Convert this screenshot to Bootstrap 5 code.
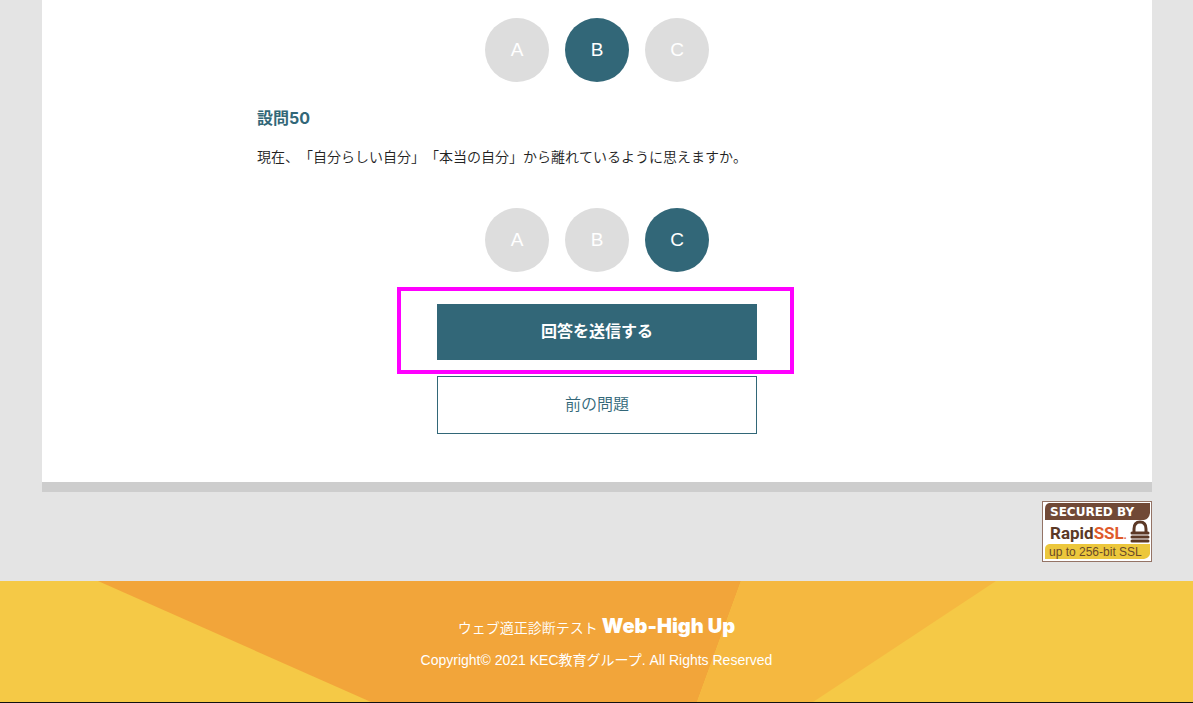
<!DOCTYPE html>
<html lang="ja">
<head>
<meta charset="utf-8">
<meta name="viewport" content="width=device-width, initial-scale=1">
<title>ウェブ適正診断テスト Web-High Up</title>
<link href="https://cdn.jsdelivr.net/npm/bootstrap@5.3.0/dist/css/bootstrap.min.css" rel="stylesheet">
<style>
  :root { --teal: #326778; }
  body { background: #e4e4e4; color: #333; font-family: "Liberation Sans", "Noto Sans CJK JP", sans-serif; font-size: 14px; line-height: 24px; text-spacing-trim: space-all; }
  .page-shell { padding: 0 41px 0 42px; }
  .sheet { border-bottom: 10px solid #cdcdcd; padding: 18px 16px 48px; }
  .question-col { max-width: 680px; }
  .question-title { color: var(--teal); font: 700 16px/24px Inter, "Noto Sans CJK JP", sans-serif; margin: 24px 0 15px; }
  .question-text { color: #222; font-weight: 350; font-kerning: none; margin-bottom: 39px; }
  .choice { width: 64px; height: 64px; background: #ddd; color: #fff; font-size: 19px; cursor: pointer; }
  .btn-check:checked + .choice { background: var(--teal); }
  .btn-check:focus-visible + .choice { outline: 2px solid #7fa6b3; outline-offset: 2px; }
  .actions { max-width: 320px; margin-top: 32px; }
  .action-btn { --bs-btn-border-radius: 0; --bs-btn-font-size: 16px; --bs-btn-line-height: 24px; --bs-btn-padding-y: 15px; --bs-btn-border-color: var(--teal); --bs-btn-hover-border-color: var(--teal); }
  .action-send { --bs-btn-bg: var(--teal); --bs-btn-color: #fff; --bs-btn-hover-bg: #285461; --bs-btn-hover-color: #fff; --bs-btn-font-weight: 700; }
  .action-back { --bs-btn-bg: #fff; --bs-btn-color: var(--teal); --bs-btn-hover-bg: #eef4f6; --bs-btn-hover-color: var(--teal); --bs-btn-font-weight: 350; --bs-btn-padding-y: 16px; }
  .callout-frame { position: absolute; inset: -17px -37px -14px -40px; border: 4px solid #f0f; pointer-events: none; }
  .seal-row { padding: 9px 0 19px; }
  .site-footer { background: #f5c946; color: #fff; border-bottom: 1px solid #111; padding: 34px 16px 29px; }
  .footer-art { position: absolute; inset: 0; width: 100%; height: 100%; }
  .product-name { font: 900 20px/20px Inter, sans-serif; }
  .footer-text { gap: 6px; }
  .footer-line { line-height: 26px; }
  .footer-title { font-weight: 350; }
</style>
</head>
<body>
<div class="page-shell">
  <main class="sheet bg-white">
    <div class="question-col mx-auto">
      <div class="d-flex justify-content-center gap-3" role="radiogroup" aria-label="設問49">
        <input class="btn-check" type="radio" name="q49" id="q49a"><label class="choice rounded-circle d-flex align-items-center justify-content-center" for="q49a">A</label>
        <input class="btn-check" type="radio" name="q49" id="q49b" checked><label class="choice rounded-circle d-flex align-items-center justify-content-center" for="q49b">B</label>
        <input class="btn-check" type="radio" name="q49" id="q49c"><label class="choice rounded-circle d-flex align-items-center justify-content-center" for="q49c">C</label>
      </div>
      <h2 class="question-title" id="q50title">設問50</h2>
      <p class="question-text">現在、「自分らしい自分」「本当の自分」から離れているように思えますか。</p>
      <div class="d-flex justify-content-center gap-3" role="radiogroup" aria-labelledby="q50title">
        <input class="btn-check" type="radio" name="q50" id="q50a"><label class="choice rounded-circle d-flex align-items-center justify-content-center" for="q50a">A</label>
        <input class="btn-check" type="radio" name="q50" id="q50b"><label class="choice rounded-circle d-flex align-items-center justify-content-center" for="q50b">B</label>
        <input class="btn-check" type="radio" name="q50" id="q50c" checked><label class="choice rounded-circle d-flex align-items-center justify-content-center" for="q50c">C</label>
      </div>
      <div class="actions mx-auto d-grid gap-3">
        <div class="position-relative d-grid">
          <button type="submit" class="btn action-btn action-send">回答を送信する</button>
          <span class="callout-frame"></span>
        </div>
        <button type="button" class="btn action-btn action-back">前の問題</button>
      </div>
    </div>
  </main>
  <div class="seal-row d-flex justify-content-end">
    <svg width="110" height="61" viewBox="0 0 110 61" role="img" aria-label="Secured by RapidSSL">
      <rect x=".5" y=".5" width="109" height="60" fill="#fff" stroke="#947466"/>
      <path d="M7 2H108V12Q107 18 102 19H3V8Q3 3 7 2Z" fill="#714936"/>
      <path d="M7 43H108V53Q107 57 102 58H3V48Q3 44 7 43Z" fill="#ecc73c"/>
      <text x="8" y="15" fill="#fff" font-family="DejaVu Sans" font-size="12" font-weight="700">SECURED BY</text>
      <text x="8" y="38" fill="#5c3926" font-family="Roboto" font-size="17" font-weight="700">Rapid<tspan fill="#df5a2b">SSL</tspan><tspan fill="#df5a2b" font-size="10">.</tspan></text>
      <text x="7" y="55" fill="#69492a" font-family="Liberation Sans" font-size="12">up to 256-bit SSL</text>
      <path d="M92 32V28Q92 21 98 21T104 28V32" fill="none" stroke="#5c3926" stroke-width="3"/>
      <path d="M90 32H106M90 36H106M90 40H106" stroke="#5c3926" stroke-width="3" stroke-linecap="round"/>
    </svg>
  </div>
</div>
<footer class="site-footer position-relative text-center">
  <svg class="footer-art" viewBox="0 0 1193 122" preserveAspectRatio="none" aria-hidden="true">
    <path d="M98 0H741L697 122H371Z" fill="#f2a53a"/>
    <path d="M741 0H996L813 122H697Z" fill="#f5b840"/>
  </svg>
  <div class="footer-text position-relative d-grid">
    <p class="footer-line mb-0"><span class="footer-title">ウェブ適正診断テスト</span> <span class="product-name">Web-High Up</span></p>
    <p class="footer-line mb-0">Copyright© 2021 KEC教育グループ. All Rights Reserved</p>
  </div>
</footer>
<script src="https://cdn.jsdelivr.net/npm/bootstrap@5.3.0/dist/js/bootstrap.bundle.min.js"></script>
</body>
</html>
